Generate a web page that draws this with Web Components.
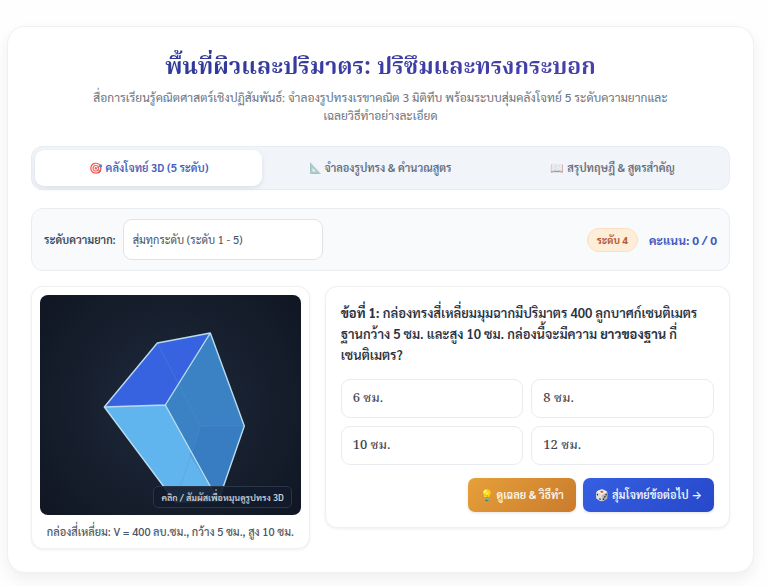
<!DOCTYPE html>
<html lang="th">
<head>
<meta charset="utf-8">
<meta name="viewport" content="width=device-width, initial-scale=1">
<title>พื้นที่ผิวและปริมาตร</title>
<style>
body{margin:0;padding:26px 14px 14px 7px;background:#fefefe;color:#2b3240;font-family:Sarabun,"Noto Sans",sans-serif;--line:#eef0f4;--serif:"Noto Serif Thai","Noto Serif",serif}
</style>
</head>
<body>
<lesson-app></lesson-app>
<script>
const define = (name, html) => customElements.define(name, class extends HTMLElement {
  constructor() {
    super();
    const t = document.createElement('template');
    t.innerHTML = '<style>*{box-sizing:border-box}:host{box-sizing:border-box;display:block}button,select{font-family:inherit}</style>' + html;
    this.attachShadow({mode: 'open'}).append(t.content.cloneNode(true));
  }
});

define('lesson-header', `<style>
:host{text-align:center}
h1{margin:0;font:700 23px/36px var(--serif);background:linear-gradient(90deg,#27378f,#5144b4);-webkit-background-clip:text;background-clip:text;color:transparent}
p{margin:2px auto 0;max-width:580px;font-size:12px;line-height:18px;color:#6d7480}
</style><h1><slot name="title"></slot></h1><p><slot></slot></p>`);

define('lesson-tabs', `<style>
nav{display:grid;grid-template-columns:repeat(3,1fr);gap:5px;padding:4px;border-radius:12px;background:#f1f4f9;box-shadow:inset 0 0 0 1px #e9edf3}
</style><nav aria-label="เมนู"><slot></slot></nav>`);

define('lesson-tab', `<style>
:host{display:grid}
button{display:flex;align-items:center;justify-content:center;gap:3px;height:36px;border:0;border-radius:9px;background:none;color:#646d7c;font-size:11px;font-weight:600;line-height:18px}
:host([active]) button{background:#fff;color:#435ebd;box-shadow:0 2px 5px #2030501a}
::slotted(svg){width:12px;height:12px}
::slotted(span){opacity:.8}
</style><button type="button"><slot name="icon"></slot><slot></slot></button>`);

define('level-bar', `<style>
:host{display:flex;align-items:center;justify-content:space-between;padding:10px 12px;border:1px solid #e9edf2;border-radius:12px;background:#f8fafc}
div{display:flex;align-items:center;gap:7px}
.right{gap:11px}
label{font-size:11px;font-weight:600;line-height:18px;color:#3c4452}
select{appearance:none;width:200px;height:41px;padding:0 9px;border:1px solid #dfe3e9;border-radius:9px;background:#fff;color:#4a515d;font-size:11px}
.level{padding:3px 9px;border:1px solid #fae0c3;border-radius:20px;background:#feedd7;color:#b45a30;font-size:10px;font-weight:700;line-height:16px}
output{font-size:12px;font-weight:700;line-height:18px;color:#3f59bd}
</style><div><label for="level">ระดับความยาก:</label><select id="level"><option>สุ่มทุกระดับ (ระดับ 1 - 5)</option></select></div>
<div class="right"><span class="level">ระดับ 4</span><output>คะแนน: 0 / 0</output></div>`);

define('lesson-card', `<style>
:host{padding:8px;border:1px solid var(--line);border-radius:12px;background:#fff;box-shadow:0 1px 3px #20305014}
:host([roomy]){padding:15px}
</style><slot></slot>`);

define('prism-viewer', `<style>
.stage{position:relative;overflow:hidden;border-radius:8px;background:radial-gradient(circle,#1f2a3c 0%,#101622 100%)}
svg{display:block;width:100%;height:220px}
.hint{position:absolute;right:9px;bottom:7px;padding:1px 7px;border:1px solid #2b3548;border-radius:5px;background:#131c2ce8;color:#c9ced7;font-size:9px;font-weight:600;line-height:18px}
p{margin:8px 0 0;text-align:center;font-size:11px;font-weight:500;line-height:17px;color:#4d5562}
</style><div class="stage">
<svg viewBox="0 0 260 220" aria-hidden="true">
<path d="M117 48 170 38 125 110 64 112z" fill="#3763e0"/>
<path d="M170 38 204 131 178 206 125 110z" fill="#3a82c3"/>
<path d="M64 112 125 110 178 206 135 207z" fill="#60b5ef"/>
<path d="M160 131H204L178 206 149 159z" fill="#356fc0" opacity=".25"/>
<path d="M117 48 160 131H204M160 131 135 207" fill="none" stroke="#5b91cf" stroke-width="1" opacity=".35"/>
<path d="M117 48 170 38 204 131 178 206 135 207 64 112zM64 112 125 110 170 38M125 110 178 206" fill="none" stroke="#b9dcef" stroke-width="1.4" stroke-linejoin="round"/>
</svg><span class="hint">คลิก / สัมผัสเพื่อหมุนดูรูปทรง 3D</span></div><p><slot></slot></p>`);

define('answer-option', `<style>
:host{display:grid}
button{height:39px;padding:0 11px;text-align:left;border:1px solid #e8ebf0;border-radius:9px;background:#fff;color:#3f4651;font:500 13px/18px var(--serif)}
</style><button type="button"><slot></slot></button>`);

define('action-button', `<style>
button{display:flex;align-items:center;gap:3px;height:34px;padding:0 12px;border:0;border-radius:7px;color:#fdf8ee;font-size:11px;font-weight:600;line-height:18px;white-space:nowrap;background:linear-gradient(135deg,#e6a03a,#ca7b2c);box-shadow:0 1px 3px #20305022}
:host([primary]) button{color:#f2f5ff;background:linear-gradient(135deg,#365fe2,#2748ca)}
</style><button type="button"><slot name="icon"></slot><slot></slot></button>`);

define('quiz-question', `<style>
p{margin:0;font-size:13px;font-weight:600;line-height:21px;color:#2b3240}
.options{display:grid;grid-template-columns:1fr 1fr;gap:8px;margin-top:14px}
.actions{display:flex;justify-content:flex-end;gap:7px;margin-top:13px}
</style><p><slot></slot></p><div class="options"><slot name="option"></slot></div><div class="actions"><slot name="action"></slot></div>`);

define('lesson-app', `<style>
main{padding:23px;border:1px solid #eff0f2;border-radius:18px;background:#fff;box-shadow:0 6px 14px #20304012}
lesson-tabs{margin-top:22px}
level-bar{margin-top:18px}
.columns{display:grid;grid-template-columns:11fr 16fr;gap:15px;align-items:start;margin-top:15px}
b{font-weight:700}
.arrow{font-family:Inter,sans-serif}
</style><main>
<lesson-header><span slot="title">พื้นที่ผิวและปริมาตร: ปริซึมและทรงกระบอก</span>สื่อการเรียนรู้คณิตศาสตร์เชิงปฏิสัมพันธ์: จำลองรูปทรงเรขาคณิต 3 มิติทึบ พร้อมระบบสุ่มคลังโจทย์ 5 ระดับความยากและเฉลยวิธีทำอย่างละเอียด</lesson-header>
<lesson-tabs>
<lesson-tab active><span slot="icon">🎯</span>คลังโจทย์ 3D (5 ระดับ)</lesson-tab>
<lesson-tab><svg slot="icon" viewBox="0 0 12 12"><path fill="#a9cccd" fill-rule="evenodd" d="M1 0v12h11zM3.500 6v3.500H7z"/><path d="M1 2h1M1 4h1M1 6h1M1 8h1M4 11v1M6 11v1M8 11v1" stroke="#7faeb2" stroke-width=".5"/></svg>จำลองรูปทรง &amp; คำนวณสูตร</lesson-tab>
<lesson-tab><span slot="icon">📖</span>สรุปทฤษฎี &amp; สูตรสำคัญ</lesson-tab>
</lesson-tabs>
<level-bar></level-bar>
<div class="columns">
<lesson-card><prism-viewer>กล่องสี่เหลี่ยม: V = 400 ลบ.ซม., กว้าง 5 ซม., สูง 10 ซม.</prism-viewer></lesson-card>
<lesson-card roomy><quiz-question><b>ข้อที่ 1:</b> กล่องทรงสี่เหลี่ยมมุมฉากมีปริมาตร 400 ลูกบาศก์เซนติเมตร ฐานกว้าง 5 ซม. และสูง 10 ซม. กล่องนี้จะมีความ <b>ยาวของฐาน</b> กี่เซนติเมตร?
<answer-option slot="option">6 ซม.</answer-option><answer-option slot="option">8 ซม.</answer-option><answer-option slot="option">10 ซม.</answer-option><answer-option slot="option">12 ซม.</answer-option>
<action-button slot="action"><span slot="icon">💡</span>ดูเฉลย &amp; วิธีทำ</action-button><action-button slot="action" primary><span slot="icon">🎲</span>สุ่มโจทย์ข้อต่อไป<span class="arrow">→</span></action-button>
</quiz-question></lesson-card>
</div></main>`);
</script>
</body>
</html>
